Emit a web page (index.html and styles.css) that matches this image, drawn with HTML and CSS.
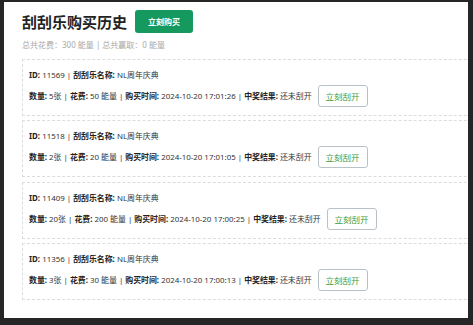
FILE: index.html
```html
<!DOCTYPE html>
<html lang="zh-CN">
<head>
    <meta charset="UTF-8">
    <meta name="viewport" content="width=device-width, initial-scale=1.0">
    <title>刮刮乐购买历史</title>
    <link rel="stylesheet" href="styles.css">
</head>
<body>
    <div class="panel">
        <div class="header">
            <h1>刮刮乐购买历史</h1>
            <button class="btn-buy">立刻购买</button>
        </div>
        <div class="summary">总共花费：300 能量 | 总共赢取：0 能量</div>

        <div class="history">
            <div class="ticket">
                <div class="line"><span><b>ID:</b> 11569 | <b>刮刮乐名称:</b> NL周年庆典</span></div>
                <div class="line">
                    <span><b>数量:</b> 5张 | <b>花费:</b> 50 能量 | <b>购买时间:</b> 2024-10-20 17:01:26 | <b>中奖结果:</b> 还未刮开</span>
                    <button class="btn-open">立刻刮开</button>
                </div>
            </div>
            <div class="ticket">
                <div class="line"><span><b>ID:</b> 11518 | <b>刮刮乐名称:</b> NL周年庆典</span></div>
                <div class="line">
                    <span><b>数量:</b> 2张 | <b>花费:</b> 20 能量 | <b>购买时间:</b> 2024-10-20 17:01:05 | <b>中奖结果:</b> 还未刮开</span>
                    <button class="btn-open">立刻刮开</button>
                </div>
            </div>
            <div class="ticket">
                <div class="line"><span><b>ID:</b> 11409 | <b>刮刮乐名称:</b> NL周年庆典</span></div>
                <div class="line">
                    <span><b>数量:</b> 20张 | <b>花费:</b> 200 能量 | <b>购买时间:</b> 2024-10-20 17:00:25 | <b>中奖结果:</b> 还未刮开</span>
                    <button class="btn-open">立刻刮开</button>
                </div>
            </div>
            <div class="ticket">
                <div class="line"><span><b>ID:</b> 11356 | <b>刮刮乐名称:</b> NL周年庆典</span></div>
                <div class="line">
                    <span><b>数量:</b> 3张 | <b>花费:</b> 30 能量 | <b>购买时间:</b> 2024-10-20 17:00:13 | <b>中奖结果:</b> 还未刮开</span>
                    <button class="btn-open">立刻刮开</button>
                </div>
            </div>
        </div>
    </div>
</body>
</html>
```

FILE: styles.css
```css
body {
    margin: 0;
    background-color: #262626;
    font-family: 'Noto Sans', 'Noto Sans CJK SC', sans-serif;
    height: 325px;
    overflow: hidden;
}
.panel {
    margin: 2px 0 0 4px;
    width: 464px;
    height: 316px;
    background-color: #fff;
    overflow: hidden;
    box-sizing: border-box;
    padding: 8px 0 0 18px;
}
.header {
    display: flex;
    align-items: center;
    gap: 8px;
}
h1 {
    margin: 0;
    font-family: 'Noto Sans CJK SC', sans-serif;
    font-size: 15px;
    font-weight: 700;
    color: #222;
    line-height: 23px;
}
.btn-buy {
    font-family: 'Noto Sans CJK SC', sans-serif;
    font-size: 8px;
    font-weight: 700;
    color: #fff;
    background-color: #15995e;
    border: none;
    border-radius: 3px;
    width: 58px;
    height: 23px;
    padding: 0;
}
.summary {
    margin-top: 6px;
    font-size: 8px;
    line-height: 12px;
    color: #a9a9a9;
}
.history {
    margin-top: 8px;
    width: 480px;
}
.ticket {
    border: 1px dashed #dcdcdc;
    padding: 8px 6px;
    margin-bottom: 4.3px;
    font-size: 7.9px;
    color: #333;
}
.ticket b {
    font-weight: 700;
    color: #222;
}
.line {
    display: flex;
    align-items: center;
    gap: 6px;
    line-height: 14px;
}
.line + .line {
    margin-top: 3px;
}
.btn-open {
    font-family: 'Noto Sans CJK SC', sans-serif;
    font-size: 8.5px;
    color: #3a9d3a;
    background-color: #fff;
    border: 1px solid #b9c1c9;
    border-radius: 3px;
    width: 50px;
    height: 22px;
    padding: 0;
}
```
